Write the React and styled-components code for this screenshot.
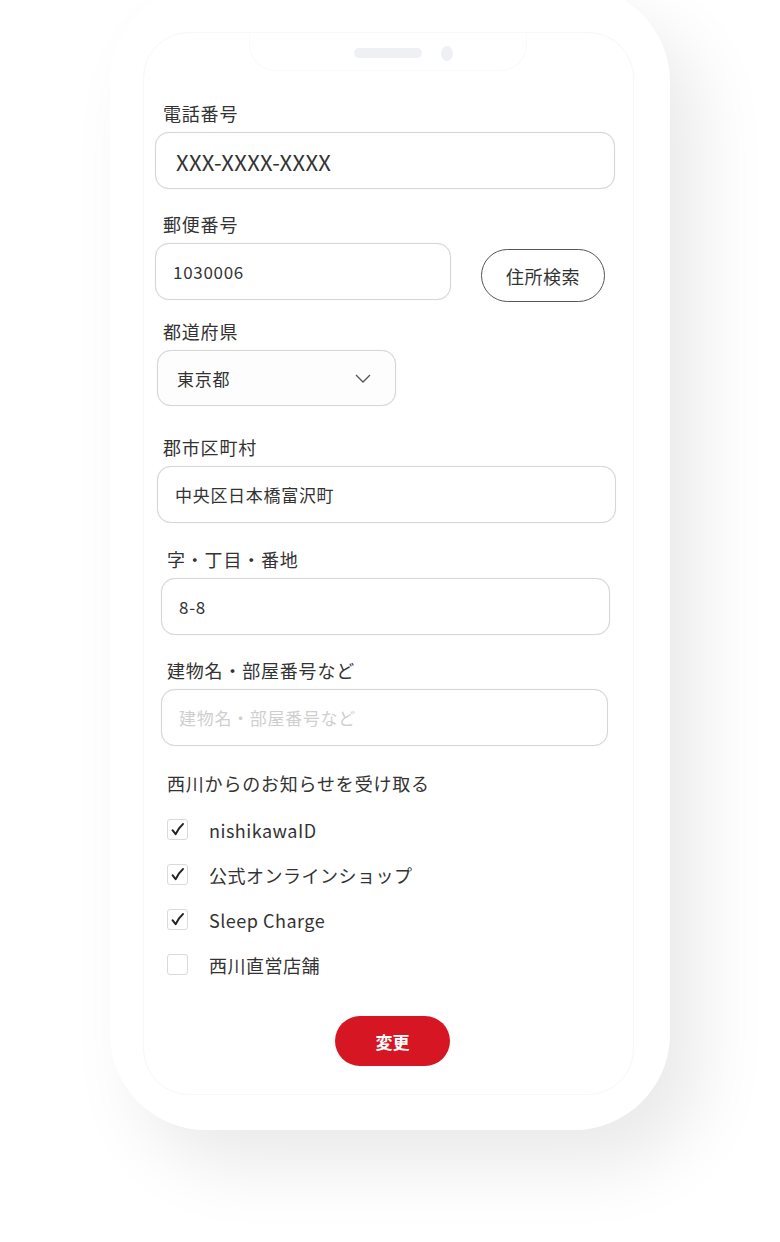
import styled, { createGlobalStyle } from 'styled-components';

const GlobalStyle = createGlobalStyle`
  body {
    margin: 0;
    background: #fff;
    font-family: 'Noto Sans CJK JP', 'Noto Sans', sans-serif;
    color: #333;
  }
`;

const notices = [
  { label: 'nishikawaID', checked: true },
  { label: '公式オンラインショップ', checked: true },
  { label: 'Sleep Charge', checked: true },
  { label: '西川直営店舗', checked: false },
];

export default function App() {
  return (
    <Page>
      <GlobalStyle />
      <Phone>
        <Screen>
          <Notch>
            <Speaker />
            <Camera />
          </Notch>
          <Form>
            <Field $x={11} $top={0}>
              <Label $indent={8}>電話番号</Label>
              <Input $width={460} $big readOnly defaultValue="XXX-XXXX-XXXX" />
            </Field>

            <Field $x={11} $top={23}>
              <Label $indent={8}>郵便番号</Label>
              <Row>
                <Input $width={296} readOnly defaultValue="1030006" />
                <SearchButton>住所検索</SearchButton>
              </Row>
            </Field>

            <Field $x={13} $top={17}>
              <Label $indent={6}>都道府県</Label>
              <Select>
                <span>東京都</span>
                <svg width="16" height="9" viewBox="0 0 16 9">
                  <polyline points="1,1 8,8 15,1" fill="none" stroke="#555" strokeWidth="1.3" />
                </svg>
              </Select>
            </Field>

            <Field $x={13} $top={29}>
              <Label $indent={6}>郡市区町村</Label>
              <Input $width={459} readOnly defaultValue="中央区日本橋富沢町" />
            </Field>

            <Field $x={17} $top={24}>
              <Label $indent={6}>字・丁目・番地</Label>
              <Input $width={449} readOnly defaultValue="8-8" />
            </Field>

            <Field $x={17} $top={23}>
              <Label $indent={6}>建物名・部屋番号など</Label>
              <Input $width={447} readOnly placeholder="建物名・部屋番号など" />
            </Field>

            <Heading>西川からのお知らせを受け取る</Heading>
            <CheckList>
              {notices.map((n) => (
                <CheckRow key={n.label}>
                  <Box>
                    {n.checked && (
                      <svg width="15" height="15" viewBox="0 0 15 15">
                        <path
                          d="M2.5 8.2 L5.6 12.2 Q9 5.5 13 2"
                          fill="none"
                          stroke="#222"
                          strokeWidth="1.9"
                          strokeLinecap="round"
                          strokeLinejoin="round"
                        />
                      </svg>
                    )}
                  </Box>
                  <CheckLabel>{n.label}</CheckLabel>
                </CheckRow>
              ))}
            </CheckList>

            <Submit>変更</Submit>
          </Form>
        </Screen>
      </Phone>
    </Page>
  );
}

const Page = styled.div`
  width: 780px;
  height: 1242px;
  overflow: hidden;
  padding-left: 110px;
  box-sizing: border-box;
`;

const Phone = styled.div`
  width: 560px;
  height: 1144px;
  margin-top: -14px;
  padding: 46px 36px 35px 33px;
  box-sizing: border-box;
  background: #fff;
  border-radius: 96px;
  box-shadow: 30px 36px 70px rgba(0, 0, 0, 0.085);
`;

const Screen = styled.div`
  height: 100%;
  border: 1px solid #f7f7f7;
  border-radius: 46px;
  box-sizing: border-box;
`;

const Notch = styled.div`
  width: 278px;
  height: 39px;
  margin: -1px auto 0;
  padding: 4px 0 0 31px;
  box-sizing: border-box;
  display: flex;
  align-items: center;
  justify-content: center;
  gap: 19px;
  border: 1px solid #fafafa;
  border-top: none;
  border-radius: 0 0 26px 26px;
  transform: translateX(-1px);
`;

const Speaker = styled.div`
  width: 68px;
  height: 10px;
  border-radius: 5px;
  background: #eef0f3;
`;

const Camera = styled.div`
  width: 12px;
  height: 15px;
  border-radius: 50%;
  background: #eef0f3;
`;

const Form = styled.div`
  padding-top: 30px;
  display: flex;
  flex-direction: column;
`;

const Field = styled.div`
  margin-left: ${(p) => p.$x}px;
  margin-top: ${(p) => p.$top}px;
  display: flex;
  flex-direction: column;
  gap: 7px;
`;

const Label = styled.div`
  margin-left: ${(p) => p.$indent}px;
  font-size: 18px;
  line-height: 24px;
  letter-spacing: 0.8px;
  color: #333;
`;

const Input = styled.input`
  width: ${(p) => p.$width}px;
  height: 57px;
  box-sizing: border-box;
  padding: 0 ${(p) => (p.$big ? 20 : 17)}px;
  border: 1.5px solid #d6d6d6;
  border-radius: 14px;
  box-shadow: 0 0 1px rgba(0, 0, 0, 0.12);
  background: #fff;
  font-family: inherit;
  font-size: ${(p) => (p.$big ? 22 : 17)}px;
  letter-spacing: ${(p) => (p.$big ? 0.3 : 0.7)}px;
  color: #333;
  outline: none;

  &::placeholder {
    color: #cfcfcf;
  }
`;

const Row = styled.div`
  display: flex;
  align-items: flex-start;
  gap: 30px;
`;

const SearchButton = styled.button`
  margin-top: 6px;
  width: 124px;
  height: 53px;
  border: 1.2px solid #555;
  border-radius: 27px;
  background: #fff;
  font-family: inherit;
  font-size: 18px;
  letter-spacing: 0.5px;
  color: #333;
`;

const Select = styled.div`
  width: 239px;
  height: 56px;
  box-sizing: border-box;
  padding: 0 24px 0 19px;
  display: flex;
  align-items: center;
  justify-content: space-between;
  border: 1.5px solid #d6d6d6;
  border-radius: 14px;
  box-shadow: 0 0 1px rgba(0, 0, 0, 0.12);
  background: #fdfdfd;
  font-size: 17px;
  letter-spacing: 0.7px;
  color: #333;
`;

const Heading = styled.div`
  margin: 25px 0 0 23px;
  font-size: 18px;
  line-height: 24px;
  letter-spacing: 0.8px;
  color: #333;
`;

const CheckList = styled.div`
  margin: 12px 0 0 23px;
  display: flex;
  flex-direction: column;
`;

const CheckRow = styled.div`
  height: 45px;
  display: flex;
  align-items: center;
  gap: 21px;
`;

const Box = styled.span`
  width: 21px;
  height: 21px;
  box-sizing: border-box;
  border: 1px solid #dadada;
  border-radius: 3px;
  display: flex;
  align-items: center;
  justify-content: center;
`;

const CheckLabel = styled.span`
  font-size: 18px;
  letter-spacing: 0.5px;
  color: #333;
`;

const Submit = styled.button`
  margin: 29px 0 0 191px;
  width: 115px;
  height: 50px;
  border: none;
  border-radius: 25px;
  background: #d71624;
  color: #fff;
  font-family: inherit;
  font-size: 17px;
  font-weight: bold;
`;
